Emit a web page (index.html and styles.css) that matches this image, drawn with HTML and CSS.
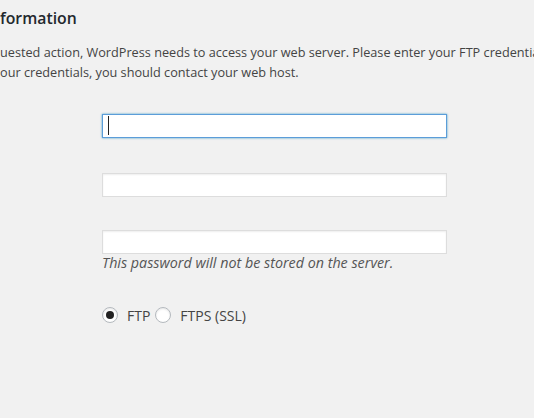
FILE: index.html
```html
<!DOCTYPE html>
<html lang="en">
<head>
<meta charset="utf-8">
<title>Connection Information</title>
<link rel="stylesheet" href="styles.css">
</head>
<body>
<div class="page">
  <h2 class="title">formation</h2>
  <p class="intro">
    <span class="line">uested action, WordPress needs to access your web server. Please enter your FTP credentia</span>
    <span class="line">our credentials, you should contact your web host.</span>
  </p>
  <div class="fields">
    <div class="field field-host">
      <span class="input-wrap">
        <input type="text" class="text-input is-focus" aria-label="Hostname">
        <span class="caret"></span>
      </span>
    </div>
    <div class="field field-user">
      <input type="text" class="text-input" aria-label="FTP Username">
    </div>
    <div class="field field-pass">
      <input type="password" class="text-input" aria-label="FTP Password">
      <p class="description">This password will not be stored on the server.</p>
    </div>
    <div class="field field-type">
      <label class="choice"><input type="radio" name="connection_type" class="radio" checked><span>FTP</span></label>
      <label class="choice"><input type="radio" name="connection_type" class="radio"><span>FTPS (SSL)</span></label>
    </div>
  </div>
</div>
</body>
</html>
```

FILE: styles.css
```css
html, body {
  margin: 0;
  padding: 0;
  background: #f1f1f1;
  overflow: hidden;
}

body {
  font-family: "Open Sans", "Noto Sans", sans-serif;
  font-size: 13px;
  color: #444;
}

.page {
  padding-top: 8px;
}

.title {
  margin: 0;
  font-size: 15.8px;
  line-height: 20px;
  font-weight: 600;
  color: #23282d;
}

.intro {
  margin: 15px 0 0;
  font-size: 12.7px;
  line-height: 19.5px;
  white-space: nowrap;
}

.intro .line {
  display: block;
}

.fields {
  margin-left: 102px;
  width: 345px;
  display: flex;
  flex-direction: column;
}

.field-host {
  margin-top: 32px;
}

.field-user {
  margin-top: 35px;
}

.field-pass {
  margin-top: 33px;
}

.field-type {
  margin-top: 33px;
  display: flex;
  align-items: center;
  height: 20px;
  font-size: 14px;
}

.input-wrap {
  position: relative;
  display: block;
}

.text-input {
  display: block;
  box-sizing: border-box;
  width: 345px;
  height: 24px;
  margin: 0;
  padding: 3px 5px;
  border: 1px solid #ddd;
  border-radius: 0;
  background: #fff;
  box-shadow: inset 0 1px 2px rgba(0, 0, 0, 0.07);
  font-family: inherit;
  font-size: 14px;
  color: #32373c;
  outline: none;
  caret-color: transparent;
}

.text-input.is-focus {
  border-color: #5b9dd9;
  box-shadow: 0 0 2px rgba(30, 140, 190, 0.8);
}

.caret {
  position: absolute;
  left: 6px;
  top: 2px;
  width: 1px;
  height: 19px;
  background: #222;
}

.description {
  margin: 0;
  font-size: 14.3px;
  line-height: 18px;
  font-style: italic;
  color: #555;
}

.choice {
  display: flex;
  align-items: center;
}

.choice + .choice {
  margin-left: 5px;
}

.radio {
  -webkit-appearance: none;
  appearance: none;
  box-sizing: border-box;
  width: 16px;
  height: 16px;
  margin: 0 9px 0 0;
  border: 1px solid #b4b9be;
  border-radius: 50%;
  background: #fff;
  box-shadow: inset 0 1px 2px rgba(0, 0, 0, 0.1);
  display: flex;
  align-items: center;
  justify-content: center;
}

.radio:checked::before {
  content: "";
  width: 8px;
  height: 8px;
  border-radius: 50%;
  background: #222;
}
```
